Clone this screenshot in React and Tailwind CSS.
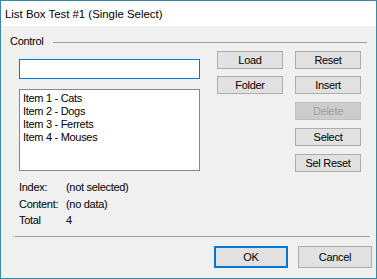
import React from "react";

const Btn = ({ children, className = "", disabled = false }) => (
  <div
    className={
      "flex items-center justify-center border text-[11px] leading-[13px] " +
      (disabled
        ? "bg-[#cccccc] border-[#bfbfbf] text-[#a0a0a0] "
        : "bg-[#e1e1e1] border-[#adadad] text-black ") +
      className
    }
  >
    {children}
  </div>
);

export default function App() {
  return (
    <div
      className="w-[377px] h-[279px] flex flex-col border border-[#3a87a6] bg-[#f0f0f0] text-black overflow-hidden"
      style={{ fontFamily: '"Liberation Sans", Arial, sans-serif' }}
    >
      <div className="h-[25px] bg-white flex items-center pl-[4px] text-[11.4px] leading-[14px] shrink-0">
        List Box Test #1 (Single Select)
      </div>
      <div className="flex-1 flex flex-col text-[11px] leading-[13px] tracking-[-0.3px]">
        <div className="mt-[9px] h-[13px] flex items-center pl-[9px]">
          <span>Control</span>
          <div className="ml-[10px] mt-[1px] w-[314px] h-[1px] bg-[#a0a0a0]" />
        </div>
        <div className="mt-[3px] flex h-[121px]">
          <div className="ml-[18px] w-[181px] flex flex-col">
            <div className="mt-[8px] h-[20px] border border-[#0078d7] bg-white" />
            <div className="mt-[10px] h-[82px] border border-[#828790] bg-white pl-[3px] pt-[2px] flex flex-col">
              <div className="h-[13px]">Item 1 - Cats</div>
              <div className="h-[13px]">Item 2 - Dogs</div>
              <div className="h-[13px]">Item 3 - Ferrets</div>
              <div className="h-[13px]">Item 4 - Mouses</div>
            </div>
          </div>
          <div className="ml-[17px] w-[66px] flex flex-col">
            <Btn className="h-[18px]">Load</Btn>
            <Btn className="h-[18px] mt-[7px]">Folder</Btn>
          </div>
          <div className="ml-[12px] w-[66px] flex flex-col">
            <Btn className="h-[18px]">Reset</Btn>
            <Btn className="h-[18px] mt-[7px]">Insert</Btn>
            <Btn className="h-[18px] mt-[8px]" disabled>
              Delete
            </Btn>
            <Btn className="h-[18px] mt-[8px]">Select</Btn>
            <Btn className="h-[18px] mt-[8px]">Sel Reset</Btn>
          </div>
        </div>
        <div className="mt-[9px] flex flex-col pl-[18px]">
          <div className="h-[13px] flex">
            <span className="w-[47px]">Index:</span>
            <span>(not selected)</span>
          </div>
          <div className="h-[13px] flex mt-[4px]">
            <span className="w-[47px]">Content:</span>
            <span>(no data)</span>
          </div>
          <div className="h-[13px] flex mt-[3px]">
            <span className="w-[47px]">Total</span>
            <span>4</span>
          </div>
        </div>
        <div className="mt-[9px] h-[1px] flex pl-[12px]">
          <div className="w-[1px] h-[1px] bg-[#a0a0a0]" />
          <div className="ml-[1px] w-[355px] h-[1px] bg-[#a0a0a0]" />
        </div>
        <div className="mt-[9px] flex pl-[213px]">
          <div className="w-[74px] h-[22px] border-2 border-[#0078d7] bg-[#e1e1e1] flex items-center justify-center">
            OK
          </div>
          <Btn className="ml-[10px] w-[74px] h-[22px]">Cancel</Btn>
        </div>
      </div>
    </div>
  );
}
